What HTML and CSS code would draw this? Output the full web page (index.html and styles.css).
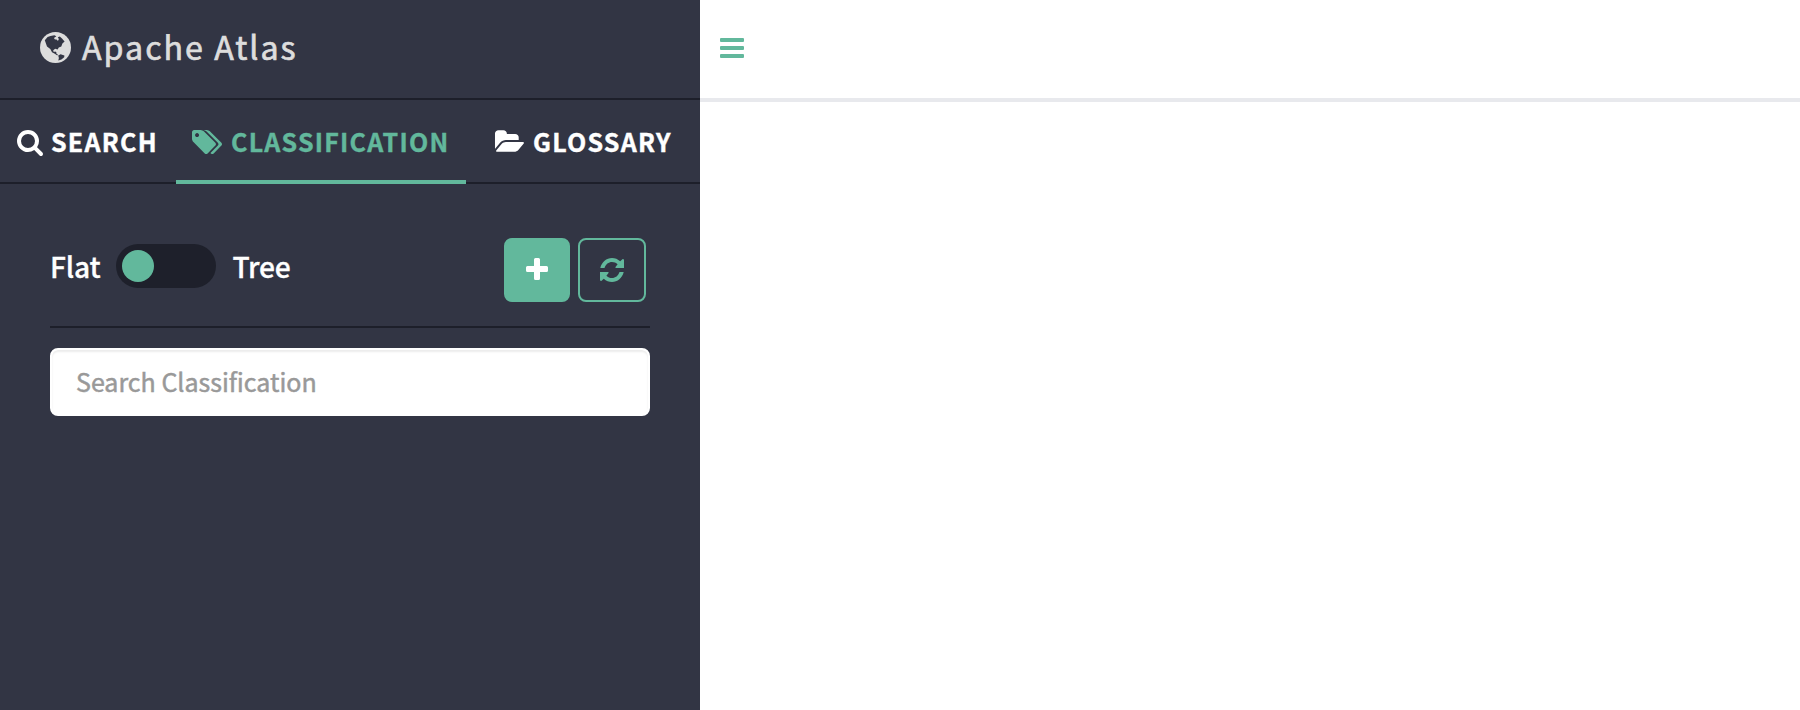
FILE: index.html
```html
<!DOCTYPE html>
<html lang="en">
<head>
<meta charset="utf-8">
<title>Apache Atlas</title>
<link rel="stylesheet" href="styles.css">
</head>
<body>
<div class="app">
  <aside class="sidebar">
    <header class="brand">
      <svg class="icon-globe" viewBox="0 0 31 31"><circle cx="15.5" cy="15.5" r="15.5" fill="#ddd"/><path fill="#323544" d="M5.500 10.200L4.800 8.300L7.600 5L10.500 3.900L14.400 3.300L16.300 4.200L15.400 5L14.400 5.500L14.200 7.100L15.600 7.600L16.600 7.600L17.600 8.800L18.700 8L18.600 6.500L17.800 5.200L19.800 4.600L22 6.400L24.600 9.500L22.400 11.600L21.300 14.400L18.800 15.600L17.600 17.400L15.200 16.800L13.200 18.300L13.700 20L15.200 19.600L16.400 20.200L16.300 21.600L17.800 22.600L17.300 23.400L14.800 21.800L12 20.200L10.300 17L7 14.400ZM18.200 23.400L20.600 22.200L24.400 23.600L24.200 25.200L21.400 27.400L18.300 28.400L18.900 26Z"/></svg>
      <span>Apache Atlas</span>
    </header>
    <nav class="tabs">
      <a class="tab tab-search">
        <svg class="icon-search" viewBox="64 128 1664 1664"><path d="M1216 832q0-185-131.5-316.5t-316.5-131.5-316.5 131.5-131.5 316.5 131.5 316.5 316.5 131.5 316.5-131.5 131.5-316.5zm512 832q0 52-38 90t-90 38q-54 0-90-38l-343-342q-179 124-399 124-143 0-273.5-55.5t-225-150-150-225-55.5-273.5 55.5-273.5 150-225 225-150 273.5-55.5 273.5 55.5 225 150 150 225 55.5 273.5q0 220-124 399l343 343q37 37 37 90z"/></svg>
        <span>SEARCH</span>
      </a>
      <a class="tab tab-classification active">
        <svg class="icon-tags" viewBox="0 128 1899 1515"><path d="M448 448q0-53-37.500-90.500t-90.500-37.500-90.500 37.500-37.500 90.500 37.500 90.500 90.500 37.500 90.500-37.500 37.500-90.500zm1067 576q0 53-37 90l-491 492q-39 37-91 37-53 0-90-37l-715-716q-38-37-64.500-101t-26.500-117v-416q0-52 38-90t90-38h416q53 0 117 26.500t102 64.500l715 714q37 39 37 91zm384 0q0 53-37 90l-491 492q-39 37-91 37-36 0-59-14t-53-45l470-470q37-37 37-90 0-52-37-91l-715-714q-38-38-102-64.500t-117-26.500h224q53 0 117 26.500t102 64.500l715 714q37 39 37 91z"/></svg>
        <span>CLASSIFICATION</span>
      </a>
      <a class="tab tab-glossary">
        <svg class="icon-folder" viewBox="0 128 1943 1408"><path d="M1943 952q0 31-31 66l-336 396q-43 51-120.500 86.500t-143.500 35.500h-1088q-34 0-60.500-13t-26.500-43q0-31 31-66l336-396q43-51 120.500-86.500t143.500-35.500h1088q34 0 60.500 13t26.500 43zm-343-344v160h-832q-94 0-197 47.500t-164 119.500l-337 396-5 6q0-4-.5-12.500t-.5-12.500v-960q0-92 66-158t158-66h320q92 0 158 66t66 158v32h544q92 0 158 66t66 158z"/></svg>
        <span>GLOSSARY</span>
      </a>
    </nav>
    <section class="panel">
      <div class="toolbar">
        <span class="label">Flat</span>
        <span class="switch"><span class="knob"></span></span>
        <span class="label">Tree</span>
        <div class="actions">
          <button class="btn btn-add" aria-label="Add"><svg class="icon-plus" viewBox="0 0 22 22"><path d="M9.500 0h3a1.500 1.500 0 0 1 1.500 1.500V8h6.500A1.500 1.500 0 0 1 22 9.500v3a1.500 1.500 0 0 1-1.500 1.500H14v6.500a1.500 1.500 0 0 1-1.500 1.500h-3A1.500 1.500 0 0 1 8 20.500V14H1.500A1.500 1.500 0 0 1 0 12.500v-3A1.500 1.500 0 0 1 1.500 8H8V1.500A1.500 1.500 0 0 1 9.500 0z"/></svg></button>
          <button class="btn btn-refresh" aria-label="Refresh"><svg class="icon-refresh" viewBox="0 0 24 24"><path d="M.3 10C1.700 4 6.500 0 12 0c3 0 5.900 1.200 8.200 3.300l2.500-2.200L24 1.500V10h-8.500v-1l2.100-2.700C16 4.800 14.200 4 12 4c-3.400 0-6.300 2.200-7.500 6z"/><path transform="rotate(180 12 12)" d="M.3 10C1.700 4 6.500 0 12 0c3 0 5.900 1.200 8.200 3.300l2.500-2.200L24 1.500V10h-8.500v-1l2.100-2.700C16 4.800 14.200 4 12 4c-3.400 0-6.300 2.200-7.500 6z"/></svg></button>
        </div>
      </div>
      <input class="search-input" type="text" placeholder="Search Classification">
    </section>
  </aside>
  <main class="content">
    <header class="topbar">
      <div class="menu"><span></span><span></span><span></span></div>
    </header>
  </main>
</div>
</body>
</html>
```
FILE: styles.css
```css
* { box-sizing: border-box; }
body {
  margin: 0;
  font-family: "Noto Sans CJK SC", "Noto Sans", sans-serif;
  background: #fff;
}
svg { display: block; flex: none; fill: currentColor; }
.app { display: flex; height: 710px; }
.sidebar { width: 700px; flex: none; background: #323544; color: #fff; }
.brand {
  display: flex;
  height: 100px;
  padding: 0 0 4px 40px;
  align-items: center;
  gap: 11px;
  color: #ddd;
  border-bottom: 2px solid #1d1f2a;
  font-size: 32.200px;
  letter-spacing: 2px;
  line-height: 44px;
  -webkit-text-stroke: .7px currentColor;
}
.brand span { margin-top: -2px; }
.icon-globe { width: 31px; height: 31px; }
.tabs {
  display: flex;
  height: 84px;
  border-bottom: 2px solid #1d1f2a;
  font-size: 25px;
  font-weight: 700;
  letter-spacing: 1.250px;
  line-height: 36px;
}
.tab { display: flex; height: 84px; padding-top: 23px; border-bottom: 4px solid transparent; white-space: nowrap; }
.tab span { -webkit-text-stroke: .4px currentColor; }
.tab svg { margin-top: 7px; }
.tab-search { width: 176px; padding-left: 17px; gap: 8px; }
.tab-classification { width: 290px; padding-left: 16px; gap: 9px; }
.tab-glossary { padding-left: 28px; gap: 9px; }
.active { color: #62b89c; border-bottom-color: #62b89c; }
.icon-search { width: 26px; height: 26px; }
.icon-tags { width: 30px; height: 24px; }
.icon-folder { width: 30px; height: 22px; }
.panel { padding: 54px 50px 0; }
.toolbar { display: flex; height: 90px; border-bottom: 2px solid #1d1f2a; }
.label { font-size: 28.200px; font-weight: 500; line-height: 42px; margin-top: 7px; letter-spacing: -.2px; -webkit-text-stroke: .3px currentColor; }
.switch { width: 100px; height: 44px; margin: 6px 16px 0 16px; padding: 6px; border-radius: 22px; background: #1e202b; }
.knob { display: block; width: 32px; height: 32px; border-radius: 50%; background: #62b89c; }
.actions { display: flex; gap: 8px; margin: 0 4px 0 auto; }
.btn { display: flex; width: 66px; height: 64px; padding: 0; align-items: center; justify-content: center; border: 2px solid #62b89c; border-radius: 8px; }
.btn-add { background: #62b89c; color: #fff; }
.btn-refresh { width: 68px; background: transparent; color: #62b89c; }
.icon-plus { width: 22px; height: 22px; margin-top: -2px; }
.icon-refresh { width: 24px; height: 24px; }
.search-input {
  display: block;
  width: 600px;
  height: 68px;
  margin-top: 20px;
  padding: 0 24px 2px;
  border: 2px solid #fff;
  border-radius: 8px;
  background: #fff;
  box-shadow: inset 0 2px 2px rgba(0, 0, 0, .075);
  font: 25px "Noto Sans CJK SC", "Noto Sans", sans-serif;
}
.search-input::placeholder { color: #999; opacity: 1; -webkit-text-stroke: .5px #999; }
.content { flex: 1; }
.topbar { display: flex; height: 102px; padding: 38px 20px 0; border-bottom: 4px solid #e8e9ed; }
.menu { display: flex; flex-direction: column; gap: 4px; }
.menu span { width: 24px; height: 4px; border-radius: 1px; background: #62b89c; }
```
